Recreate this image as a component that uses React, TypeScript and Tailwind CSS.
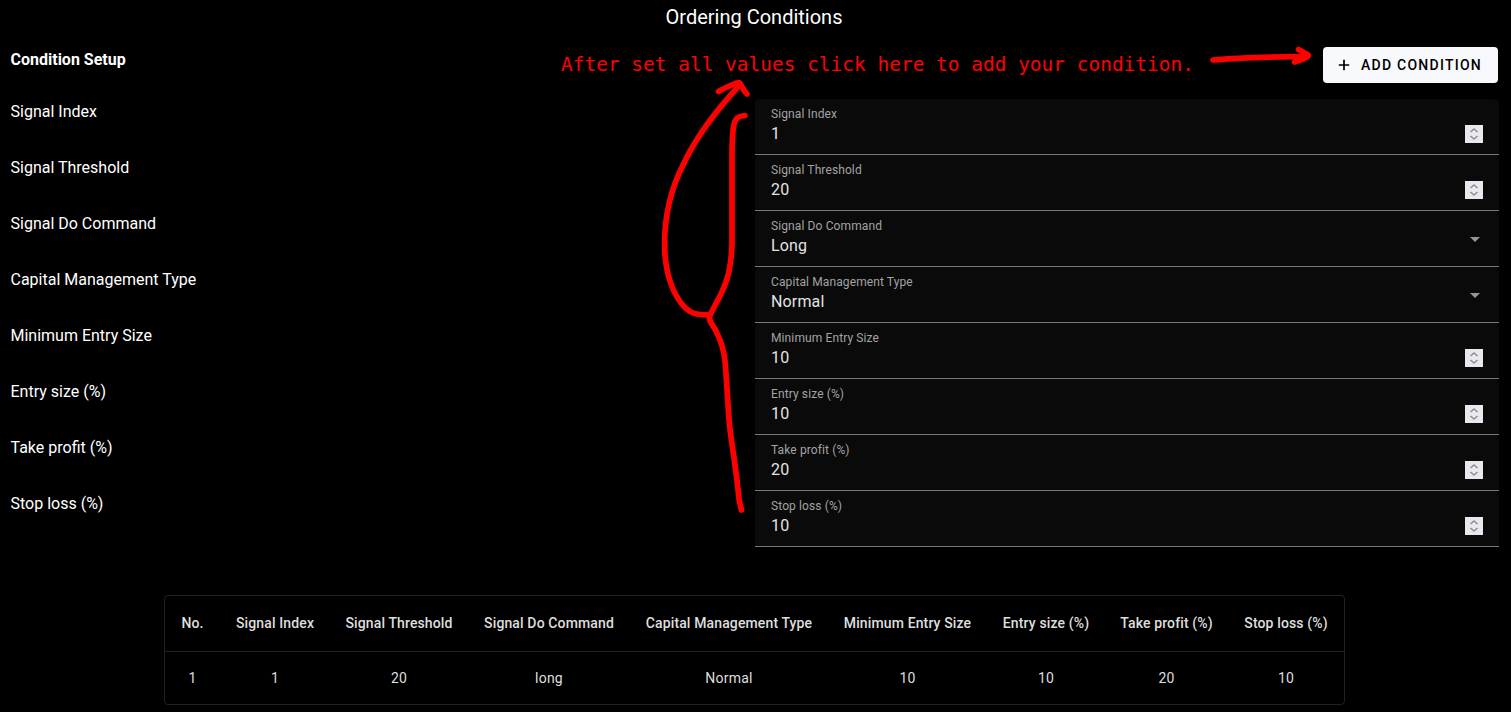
type FieldKind = "number" | "select";

interface Field {
  label: string;
  value: string;
  kind: FieldKind;
}

const fields: Field[] = [
  { label: "Signal Index", value: "1", kind: "number" },
  { label: "Signal Threshold", value: "20", kind: "number" },
  { label: "Signal Do Command", value: "Long", kind: "select" },
  { label: "Capital Management Type", value: "Normal", kind: "select" },
  { label: "Minimum Entry Size", value: "10", kind: "number" },
  { label: "Entry size (%)", value: "10", kind: "number" },
  { label: "Take profit (%)", value: "20", kind: "number" },
  { label: "Stop loss (%)", value: "10", kind: "number" },
];

const columns = [
  { title: "No.", width: "w-[55px]" },
  { title: "Signal Index", width: "w-[110px]" },
  { title: "Signal Threshold", width: "w-[138px]" },
  { title: "Signal Do Command", width: "w-[162px]" },
  { title: "Capital Management Type", width: "w-[198px]" },
  { title: "Minimum Entry Size", width: "w-[159px]" },
  { title: "Entry size (%)", width: "w-[118px]" },
  { title: "Take profit (%)", width: "w-[123px]" },
  { title: "Stop loss (%)", width: "w-[116px]" },
];

const row = ["1", "1", "20", "long", "Normal", "10", "10", "20", "10"];

function Spinner() {
  return (
    <svg className="mt-[26px] h-[18px] w-[18px] bg-[#e9e9ed]" viewBox="0 0 18 18" fill="none">
      <path d="M5.5 7 9 4 12.5 7M5.5 11 9 14 12.5 11" stroke="#8f8f9d" strokeWidth="1.6" />
    </svg>
  );
}

function Caret() {
  return (
    <svg className="mt-[26px] mr-[3px] h-[5px] w-[10px]" viewBox="0 0 10 5">
      <path d="M0 0h10L5 5z" fill="#959595" />
    </svg>
  );
}

function FieldRow({ field }: { field: Field }) {
  return (
    <div className="flex h-14">
      <div className="w-[744.5px] pt-[1px] text-base leading-6 text-white">{field.label}</div>
      <div className="flex flex-1 justify-between rounded-t border-b border-[#787878] bg-[#0a0a0a] px-4">
        <div className="pt-[7px]">
          <div className="text-[12px] leading-4 tracking-[0.11px] text-[#a3a3a3]">{field.label}</div>
          <div className="text-base leading-6 tracking-[0.15px] text-[#e3e3e3]">{field.value}</div>
        </div>
        {field.kind === "number" ? <Spinner /> : <Caret />}
      </div>
    </div>
  );
}

function Annotations() {
  return (
    <div className="pointer-events-none absolute inset-0">
      <p className="absolute top-[53px] left-[561px] font-['DejaVu_Sans_Mono',monospace] text-[19.48px] leading-6 whitespace-nowrap text-[#f00]">
        After set all values click here to add your condition.
      </p>
      <svg
        className="absolute inset-0 h-[712px] w-[1511px]"
        viewBox="0 0 1511 712"
        fill="none"
        stroke="#f00"
        strokeWidth="5.7"
        strokeLinecap="round"
        strokeLinejoin="round"
      >
        <path d="M1213 60C1235 58 1260 57 1306 56.500" />
        <path d="M1298.500 49.500C1303 52 1307 54 1308.500 55.500C1307 58 1301 60 1294.500 62L1299 57" />
        <path d="M745 115.500C739 116 735 118 734 124C732 134 732 143 732 155V245C731 267 728 280 721 294L710 315" />
        <path d="M710 315C703 315 695 315 690 311.500C677 303 667 281 665 255C663 223 670 191 683 165C696 137 715 112 737 88L740 84M718.500 91.500C725 88 734 83 739 82.500C742 84 742 90 747 94" />
        <path d="M709.500 315C708.500 322 712 323 716 331C721 341 724 350 725 361C728 394 728 419 731 437C735 464 738 488 739 499C740 504 741 508 741.500 510" />
      </svg>
    </div>
  );
}

export default function App() {
  return (
    <main className="relative h-[712px] w-[1511px] overflow-hidden bg-black font-['Roboto',sans-serif] text-white">
      <h1 className="pt-[1px] text-center text-[20px] leading-8 font-normal">
        <span className="mr-[3px]">Ordering Conditions</span>
      </h1>

      <section className="pr-3 pl-[10.5px]">
        <header className="mt-[14px] flex h-[52px] items-start justify-between pr-[1px]">
          <h2 className="pt-[1px] text-base leading-6 font-bold">Condition Setup</h2>
          <button className="flex h-9 w-[175px] items-center rounded bg-[#f8f9fc] pl-[15px] text-[14px] font-medium tracking-[1.25px] text-black">
            <svg className="mr-[11px] h-3 w-3" viewBox="0 0 12 12">
              <path d="M.8 6h10.400M6 .8v10.400" stroke="currentColor" strokeWidth="1.700" />
            </svg>
            ADD CONDITION
          </button>
        </header>
        <div>
          {fields.map((field) => (
            <FieldRow key={field.label} field={field} />
          ))}
        </div>
      </section>

      <div className="mt-12 ml-[164px] w-[1181px] rounded border border-[#222222]">
        <table className="w-[1179px] table-fixed border-separate border-spacing-0 text-center text-[14px] text-[#dedede]">
          <thead>
            <tr>
              {columns.map((column) => (
                <th
                  key={column.title}
                  className={`${column.width} h-14 border-b border-[#222222] p-0 font-medium whitespace-nowrap tracking-[0.13px]`}
                >
                  {column.title}
                </th>
              ))}
            </tr>
          </thead>
          <tbody>
            <tr>
              {row.map((cell, index) => (
                <td key={index} className="h-[52px] p-0 tracking-[0.25px]">
                  {cell}
                </td>
              ))}
            </tr>
          </tbody>
        </table>
      </div>

      <Annotations />
    </main>
  );
}
